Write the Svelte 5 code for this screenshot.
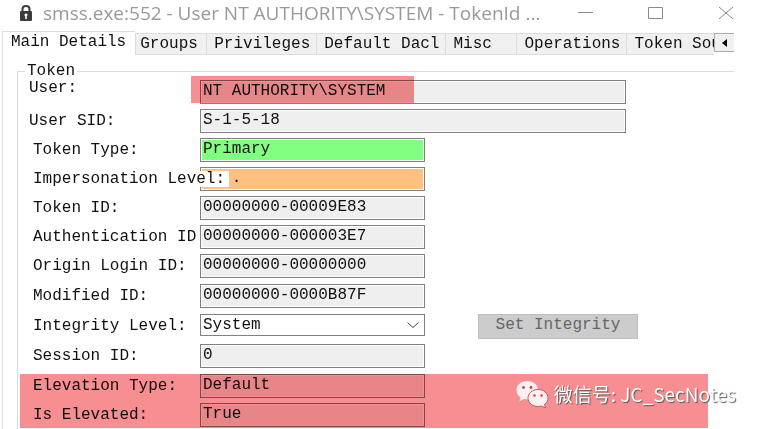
<script>
  const tabs = ['Main Details', 'Groups', 'Privileges', 'Default Dacl', 'Misc', 'Operations', 'Token Source'];
  let active = $state('Main Details');

  const identity = [
    { id: 'user', label: 'User:', value: 'NT AUTHORITY\\SYSTEM', kind: 'wide top outer marked' },
    { id: 'sid', label: 'User SID:', value: 'S-1-5-18', kind: 'wide outer' },
    { id: 'type', label: 'Token Type:', value: 'Primary', kind: 'green' },
    { id: 'imp', label: 'Impersonation Level:', value: '   .', kind: 'orange' },
    { id: 'tid', label: 'Token ID:', value: '00000000-00009E83', kind: '' },
    { id: 'auth', label: 'Authentication ID', value: '00000000-000003E7', kind: '' },
    { id: 'origin', label: 'Origin Login ID:', value: '00000000-00000000', kind: '' },
    { id: 'mod', label: 'Modified ID:', value: '00000000-0000B87F', kind: 'spaced' }
  ];
  const session = { id: 'sess', label: 'Session ID:', value: '0', kind: 'spaced' };
  const elevation = [
    { id: 'etype', label: 'Elevation Type:', value: 'Default', kind: '' },
    { id: 'elev', label: 'Is Elevated:', value: 'True', kind: '' }
  ];
</script>

{#snippet field(f)}
  <div class="row {f.kind}">
    <label for={f.id}><span>{f.label}</span></label>
    <input id={f.id} type="text" readonly value={f.value} />
  </div>
{/snippet}

<div class="window">
  <header>
    <svg class="lock" width="14" height="18" viewBox="0 0 14 18" aria-hidden="true">
      <path d="M3.500 8V5Q3.500 2 7 2T10.500 5V8" fill="none" stroke="#3c3c3c" stroke-width="2" />
      <rect x="1" y="7" width="12" height="10" rx="1" fill="#3c3c3c" />
      <path d="M7 9.500a1.500 1.500 0 0 1 .8 2.800V15H6.200V12.300A1.500 1.500 0 0 1 7 9.500z" fill="#fff" />
    </svg>
    <h1>smss.exe:552 - User NT AUTHORITY\SYSTEM - TokenId ...</h1>
    <div class="controls">
      <button aria-label="Minimize"><svg width="16" height="14"><path d="M0 6.500H15" /></svg></button>
      <button aria-label="Maximize"><svg width="16" height="14"><path d="M.5 1.500H14.500V12.500H.5z" /></svg></button>
      <button aria-label="Close"><svg width="16" height="14"><path d="M1 1L15 13M15 1L1 13" /></svg></button>
    </div>
  </header>

  <nav>
    <div class="tabs" role="tablist">
      {#each tabs as t}
        <button role="tab" aria-selected={active === t} class:active={active === t} onclick={() => (active = t)}>{t}</button>
      {/each}
    </div>
    <button class="scroll" aria-label="Scroll tabs left">
      <svg width="5" height="8"><path d="M5 0V8L0 4z" /></svg>
    </button>
  </nav>

  <main>
    <section class="group" aria-labelledby="token">
      <h2 id="token">Token</h2>
      <div class="rows">
        {#each identity as f}
          {@render field(f)}
        {/each}
        <div class="row spaced">
          <label for="level"><span>Integrity Level:</span></label>
          <div class="combo">
            <select id="level"><option>System</option><option>High</option><option>Medium</option><option>Low</option></select>
            <svg width="12" height="7" aria-hidden="true"><path d="M.5 .5L6 5.500L11.500 .5" /></svg>
          </div>
          <button class="set" disabled>Set Integrity</button>
        </div>
        {@render field(session)}
        <div class="elevated">
          {#each elevation as f}
            {@render field(f)}
          {/each}
        </div>
      </div>
    </section>
  </main>

  <div class="watermark">
    <svg width="33" height="28" viewBox="0 0 33 28" aria-hidden="true">
      <path d="M11 1C5 1 .5 5 .5 10.200c0 3 1.500 5.500 4 7.300L3.500 21.500l4.300-2.400c1 .3 2.200.4 3.400.4C17 19.500 22 15.500 22 10.200S17 1 11 1z" fill="#fdf0f1" />
      <path d="M22 9.500c-5.600 0-10 3.700-10 8.500s4.400 8.500 10 8.500c1.200 0 2.300-.2 3.300-.5l4.200 2-1-3.500c2.200-1.600 3.500-3.900 3.500-6.500 0-4.800-4.400-8.500-10-8.500z" fill="#fdf0f1" stroke="#c45c61" />
      <g fill="#b8484e"><circle cx="7.500" cy="7.500" r="1.400" /><circle cx="15" cy="7.500" r="1.400" /><circle cx="18.500" cy="15.500" r="1.200" /><circle cx="25.500" cy="15.500" r="1.200" /></g>
    </svg>
    <span>微信号: JC_SecNotes</span>
  </div>
</div>

<style>
  :global(body) { margin: 0; background: #fff; }
  * { box-sizing: border-box; }
  .window {
    position: relative;
    display: flex;
    flex-direction: column;
    min-height: 100vh;
    padding-right: 27px;
    overflow: hidden;
    background: #fff;
    color: #111;
    font: 16px/20px "Liberation Mono", monospace;
  }
  button, input, select { font: inherit; color: inherit; margin: 0; padding: 0; border: 0; border-radius: 0; background: none; }
  svg { display: block; }

  header { display: flex; align-items: center; height: 26px; padding-left: 19px; }
  h1 {
    flex: 1;
    min-width: 0;
    margin: 0 0 0 10px;
    font: 19px/26px "Open Sans", sans-serif;
    color: #999;
    white-space: nowrap;
  }
  .controls { display: flex; gap: 54px; }
  .controls path { fill: none; stroke: #8a8a8a; }

  nav { display: flex; height: 29px; margin-top: 5px; padding-left: 2px; }
  .tabs {
    flex: 1;
    display: flex;
    align-items: flex-end;
    min-width: 0;
    overflow: hidden;
    height: 24px;
  }
  .tabs button {
    flex: none;
    min-width: 71px;
    height: 22px;
    padding: 0 6px 0 7px;
    border: solid #dcdcdc;
    border-width: 1px 0 1px 1px;
    background: #f0f0f0;
    text-align: left;
    line-height: 20px;
  }
  .tabs button.active { height: 24px; padding: 0 9px 3px 8px; background: #fff; border-bottom: 0; }
  .tabs button.active + button { padding: 0 6px 0 4px; }
  .scroll {
    display: grid;
    place-items: center;
    width: 20px;
    height: 19px;
    margin-top: 2px;
    border: 1px solid #adadad;
    border-right: 0;
    background: #f0f0f0;
  }

  main { flex: 1; display: flex; margin: -5px 0 0 2px; padding-left: 14px; border-left: 1px solid #dcdcdc; }
  .group { flex: 1; min-width: 0; margin-top: 16px; border: solid #dcdcdc; border-width: 1px 0 0 1px; }
  h2 { width: max-content; margin: -11px 0 -1px 7px; padding: 0 2px; background: #fff; font: inherit; }
  .rows { display: flex; flex-direction: column; gap: 5px; margin-left: 2px; padding-bottom: 1px; }
  .row { position: relative; display: flex; align-items: center; height: 24px; padding-left: 13px; }
  .row.spaced { margin-top: 1px; }
  label { flex: none; width: 167px; white-space: nowrap; line-height: 16px; }
  label span { position: relative; z-index: 1; display: inline-block; }
  .outer { padding-left: 9px; }
  .outer label { width: 171px; }
  .top label { align-self: flex-start; }
  input, .combo { flex: none; width: 225px; height: 24px; border: 1px solid #808080; }
  input { padding: 0 2px 2px; background: #efefef; box-shadow: inset 0 0 0 1px #fff; white-space: pre; }
  .wide input { width: 426px; }
  .green input { background: #80ff80; }
  .orange input { background: #ffc080; }
  .orange label span { padding-right: 4px; background: #fff; }
  .marked::after {
    content: "";
    position: absolute;
    left: 171px;
    top: -4px;
    width: 223px;
    height: 27px;
    background: #f78e92;
    mix-blend-mode: multiply;
  }
  .combo { display: flex; align-items: center; height: 22px; align-self: flex-start; }
  select { flex: 1; height: 20px; padding-left: 2px; appearance: none; }
  .combo svg { margin: 0 5px 0 -17px; pointer-events: none; }
  .combo path { fill: none; stroke: #444; }
  .set { width: 160px; height: 25px; margin-left: 53px; padding-bottom: 2px; border: 1px solid #bfbfbf; background: #ccc; color: #666; }

  .elevated {
    position: relative;
    display: flex;
    flex-direction: column;
    gap: 5px;
    margin: 1px 26px 0 0;
    padding-bottom: 1px;
  }
  .elevated::after {
    content: "";
    position: absolute;
    z-index: 2;
    inset: 0;
    background: #f78e92;
    mix-blend-mode: multiply;
  }

  .watermark {
    position: absolute;
    z-index: 3;
    right: 25px;
    bottom: 21px;
    display: flex;
    align-items: center;
    gap: 5px;
    color: #fff;
    font: 19px/28px "Noto Sans CJK SC", sans-serif;
    text-shadow: 1px 1px 1px #555;
    white-space: nowrap;
  }
</style>
